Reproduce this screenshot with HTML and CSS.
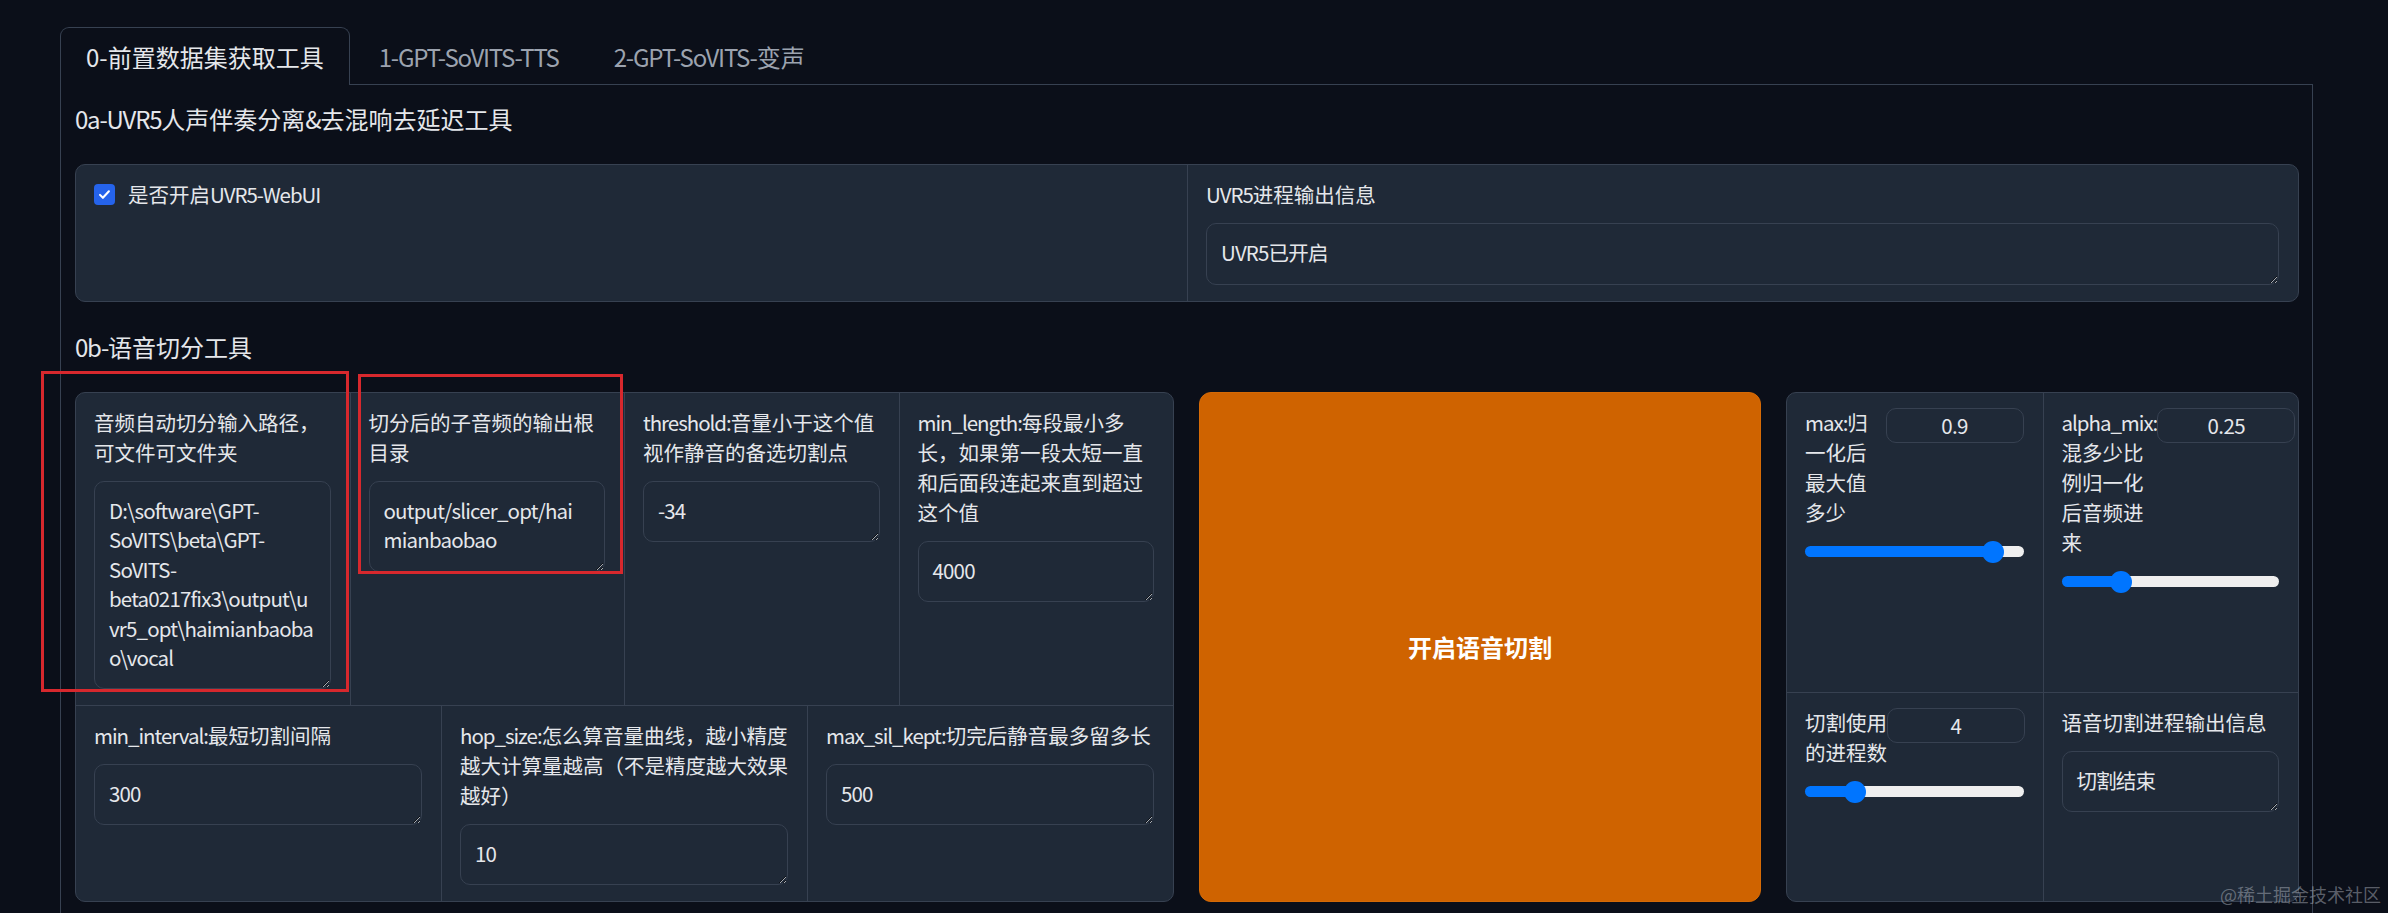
FILE: index.html
```html
<!DOCTYPE html>
<html lang="zh-CN">
<head>
<meta charset="utf-8">
<title>GPT-SoVITS WebUI</title>
<link rel="stylesheet" href="styles.css">
</head>
<body>
<div class="app">
  <div class="tab-nav">
    <button class="tab active">0-前置数据集获取工具</button>
    <button class="tab"><span class="en">1-GPT-SoVITS-TTS</span></button>
    <button class="tab"><span class="en">2-GPT-SoVITS-</span>变声</button>
  </div>
  <div class="tab-body">
    <h2 class="section-title"><span class="en">0a-UVR5</span>人声伴奏分离<span class="en">&amp;</span>去混响去延迟工具</h2>
    <div class="panel uvr-panel">
      <div class="cell">
        <label class="check">
          <span class="check-box"><svg viewBox="0 0 16 16" width="15" height="15"><path d="M3.2 8.4l3.1 3.1 6.4-7" fill="none" stroke="#fff" stroke-width="2.2" stroke-linecap="round" stroke-linejoin="round"/></svg></span>
          <span class="check-text">是否开启<span class="en">UVR5-WebUI</span></span>
        </label>
      </div>
      <div class="cell divided">
        <span class="label"><span class="en">UVR5</span>进程输出信息</span>
        <textarea class="input" rows="1" wrap="off">UVR5已开启</textarea>
      </div>
    </div>

    <h2 class="section-title second"><span class="en">0b-</span>语音切分工具</h2>
    <div class="slice-row">
      <div class="panel params">
        <div class="prow">
          <div class="cell">
            <span class="label">音频自动切分输入路径，<br>可文件可文件夹</span>
            <textarea class="input" rows="6" wrap="off">D:\software\GPT-
SoVITS\beta\GPT-
SoVITS-
beta0217fix3\output\u
vr5_opt\haimianbaoba
o\vocal</textarea>
          </div>
          <div class="cell divided">
            <span class="label">切分后的子音频的输出根<br>目录</span>
            <textarea class="input" rows="2" wrap="off">output/slicer_opt/hai
mianbaobao</textarea>
          </div>
          <div class="cell divided">
            <span class="label"><span class="en">threshold:</span>音量小于这个值<br>视作静音的备选切割点</span>
            <textarea class="input" rows="1" wrap="off">-34</textarea>
          </div>
          <div class="cell divided">
            <span class="label"><span class="en">min_length:</span>每段最小多<br>长，如果第一段太短一直<br>和后面段连起来直到超过<br>这个值</span>
            <textarea class="input" rows="1" wrap="off">4000</textarea>
          </div>
        </div>
        <div class="prow lower">
          <div class="cell">
            <span class="label"><span class="en">min_interval:</span>最短切割间隔</span>
            <textarea class="input" rows="1" wrap="off">300</textarea>
          </div>
          <div class="cell divided">
            <span class="label"><span class="en">hop_size:</span>怎么算音量曲线，越小精度<br>越大计算量越高（不是精度越大效果<br>越好）</span>
            <textarea class="input" rows="1" wrap="off">10</textarea>
          </div>
          <div class="cell divided">
            <span class="label"><span class="en">max_sil_kept:</span>切完后静音最多留多长</span>
            <textarea class="input" rows="1" wrap="off">500</textarea>
          </div>
        </div>
      </div>

      <button class="primary">开启语音切割</button>

      <div class="panel sliders">
        <div class="srow">
          <div class="cell scell">
            <div class="slider-head">
              <span class="label"><span class="en">max:</span>归<br>一化后<br>最大值<br>多少</span>
              <input class="num" type="text" value="0.9">
            </div>
            <input class="range" type="range" min="0" max="1" step="0.05" value="0.9" style="--p:86%">
          </div>
          <div class="cell scell divided">
            <div class="slider-head">
              <span class="label"><span class="en">alpha_mix:</span><br>混多少比<br>例归一化<br>后音频进<br>来</span>
              <input class="num" type="text" value="0.25">
            </div>
            <input class="range" type="range" min="0" max="1" step="0.05" value="0.25" style="--p:27.5%">
          </div>
        </div>
        <div class="srow lower">
          <div class="cell scell">
            <div class="slider-head">
              <span class="label">切割使用<br>的进程数</span>
              <input class="num" type="text" value="4">
            </div>
            <input class="range" type="range" min="1" max="16" step="1" value="4" style="--p:23%">
          </div>
          <div class="cell scell divided">
            <span class="label">语音切割进程输出信息</span>
            <textarea class="input" rows="1" wrap="off">切割结束</textarea>
          </div>
        </div>
      </div>
    </div>
  </div>
</div>

<div class="annot annot-1"></div>
<div class="annot annot-2"></div>
<div class="watermark">@稀土掘金技术社区</div>
</body>
</html>
```

FILE: styles.css
```css
html, body {
  margin: 0;
  background: #0b0f19;
}

body {
  position: relative;
  height: 913px;
  overflow: hidden;
  font-family: "Noto Sans CJK SC", "Noto Sans", sans-serif;
  color: #e5e7eb;
}

.en {
  letter-spacing: -0.05em;
}

.app {
  padding: 27px 75px 0 60px;
}

/* tabs */
.tab-nav {
  display: flex;
  align-items: flex-end;
  height: 57px;
  border-bottom: 1px solid #374151;
  gap: 3px;
}

.tab {
  height: 58px;
  margin-bottom: -1px;
  padding: 0 25px;
  display: flex;
  align-items: center;
  box-sizing: border-box;
  border: 1px solid transparent;
  border-bottom: 0;
  border-radius: 9px 9px 0 0;
  background: transparent;
  font-family: inherit;
  font-size: 24px;
  line-height: 34px;
  color: #9ca3af;
  cursor: pointer;
}

.tab.active {
  border-color: #374151;
  background: #0b0f19;
  color: #e5e7eb;
}

.tab-body {
  border: 1px solid #374151;
  border-top: 0;
  padding: 17px 13px 40px 14px;
}

.section-title {
  margin: 0 0 28px;
  font-size: 24px;
  line-height: 34px;
  font-weight: 400;
  color: #e5e7eb;
}

.section-title.second {
  margin-top: 28px;
}

/* panels */
.panel {
  background: #1f2937;
  border: 1px solid #374151;
  border-radius: 10px;
  box-sizing: border-box;
  overflow: hidden;
}

.cell {
  display: flex;
  flex-direction: column;
  gap: 14px;
  padding: 14px 19px 16px 18px;
  box-sizing: border-box;
  min-width: 0;
}

.cell.divided {
  border-left: 1px solid #374151;
}

.label {
  display: block;
  font-size: 20.5px;
  line-height: 30px;
  white-space: nowrap;
  color: #e5e7eb;
}

.input {
  display: block;
  width: 100%;
  box-sizing: border-box;
  margin: 0;
  padding: 14px 14px 16px;
  border: 1px solid #374151;
  border-radius: 10px;
  background: #1f2937;
  color: #e5e7eb;
  font-family: inherit;
  font-size: 20.5px;
  line-height: 29.5px;
  letter-spacing: -0.04em;
  white-space: pre;
  overflow: hidden;
  resize: vertical;
  color-scheme: dark;
  outline: none;
}

/* UVR5 block */
.uvr-panel {
  display: grid;
  grid-template-columns: 1fr 1fr;
}

.check {
  display: flex;
  align-items: center;
  height: 30px;
}

.check-box {
  width: 21px;
  height: 21px;
  border-radius: 4px;
  background: #2563eb;
  display: flex;
  align-items: center;
  justify-content: center;
  margin-right: 13px;
  flex: 0 0 auto;
}

.check-text {
  font-size: 20.5px;
  line-height: 30px;
}

/* slicing row */
.slice-row {
  display: flex;
  gap: 25px;
  height: 510px;
}

.params {
  flex: 0 0 1099px;
  display: grid;
  grid-template-rows: 312px 1fr;
}

.prow {
  display: flex;
}

.prow > .cell {
  flex: 1 1 0;
}

.prow.lower {
  border-top: 1px solid #374151;
}

.primary {
  flex: 1 1 auto;
  border: 1px solid #d56a06;
  border-radius: 12px;
  background: #cf6300;
  color: #ffffff;
  font-family: inherit;
  font-size: 24px;
  font-weight: 700;
  cursor: pointer;
}

.sliders {
  flex: 0 0 513px;
  display: grid;
  grid-template-rows: 299px 1fr;
}

.srow {
  display: grid;
  grid-template-columns: 1fr 1fr;
}

.srow.lower {
  border-top: 1px solid #374151;
}

.slider-head {
  display: flex;
  align-items: flex-start;
}

.slider-head .label {
  flex: 1 1 auto;
}

.num {
  flex: 0 0 138px;
  width: 138px;
  height: 35px;
  box-sizing: border-box;
  margin: 1px 0 0;
  border: 1px solid #374151;
  border-radius: 10px;
  background: #1f2937;
  color: #e5e7eb;
  font-family: inherit;
  font-size: 20.5px;
  letter-spacing: -0.03em;
  text-align: center;
  outline: none;
}

.range {
  -webkit-appearance: none;
  appearance: none;
  display: block;
  width: 100%;
  height: 22px;
  margin: 0;
  background: transparent;
}

.range::-webkit-slider-runnable-track {
  height: 11px;
  border-radius: 6px;
  background: linear-gradient(to right, #0075ff var(--p), #efefef var(--p));
}

.range::-webkit-slider-thumb {
  -webkit-appearance: none;
  appearance: none;
  width: 22px;
  height: 22px;
  margin-top: -5.5px;
  border: 0;
  border-radius: 50%;
  background: #0075ff;
}

/* overlays */
.annot {
  position: absolute;
  border: 3px solid #d7282d;
  box-sizing: border-box;
  pointer-events: none;
}

.annot-1 {
  left: 41px;
  top: 371px;
  width: 308px;
  height: 321px;
}

.annot-2 {
  left: 358px;
  top: 374px;
  width: 265px;
  height: 200px;
}

.watermark {
  position: absolute;
  left: 2220px;
  top: 881px;
  font-family: "Noto Sans CJK SC", sans-serif;
  font-size: 18px;
  line-height: 26px;
  color: rgba(190, 195, 205, 0.45);
  pointer-events: none;
}
```
